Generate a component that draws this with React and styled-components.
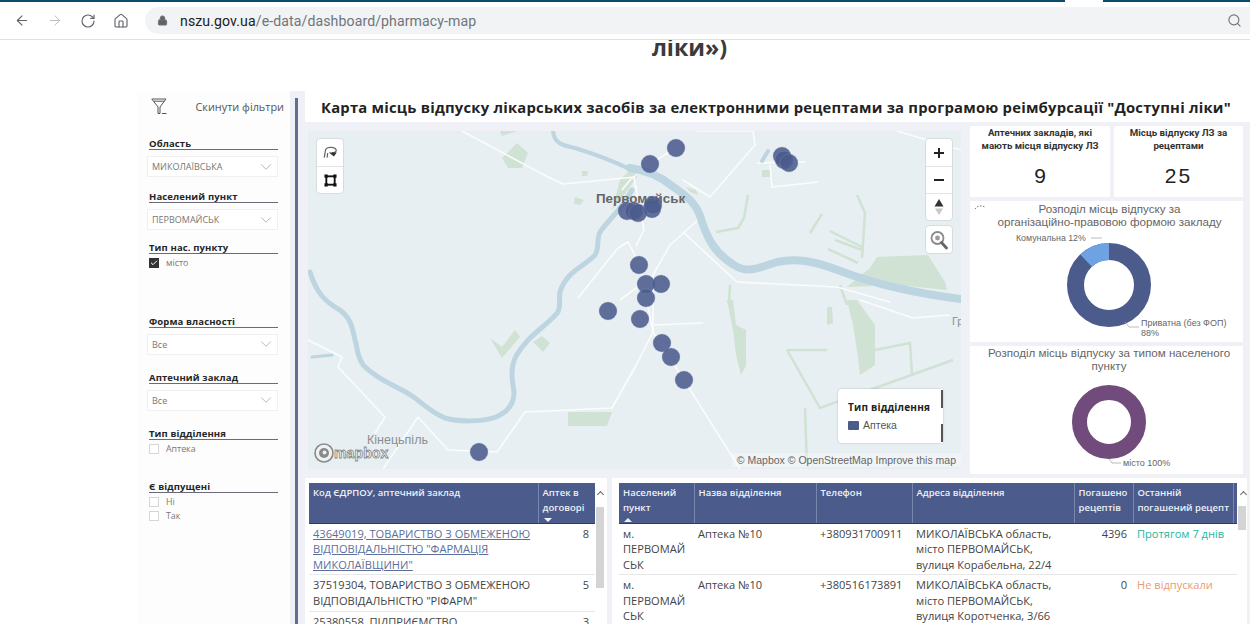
import React from "react";
import styled, { createGlobalStyle } from "styled-components";
import { ArrowLeft, ArrowRight, RotateCw, Home, Lock, Search, ChevronDown, Check } from "lucide-react";

const GlobalStyle = createGlobalStyle`
  html, body {
    margin: 0;
    height: 624px;
    overflow: hidden;
    background: #fff;
    font-family: "Open Sans", "Liberation Sans", sans-serif;
  }
  * { box-sizing: border-box; }
`;

const Page = styled.div`
  width: 1250px;
  height: 624px;
  overflow: hidden;
`;

const TopStrip = styled.div`
  position: relative;
  height: 2px;
  background: #0d4b6d;

  &::after {
    content: "";
    position: absolute;
    left: 1065px;
    width: 38px;
    top: 0;
    height: 2px;
    background: #fff;
  }
`;

const BrowserBar = styled.div`
  height: 38px;
  display: flex;
  align-items: center;
  border-bottom: 1px solid #dfe1e5;
  padding-left: 14px;
  color: #5f6368;
`;

const NavButton = styled.div`
  width: 16px;
  display: flex;
  justify-content: center;
  margin-right: 17px;
  color: ${(p) => (p.$off ? "#b5b8bc" : "#5f6368")};
`;

const UrlPill = styled.div`
  flex: 1;
  height: 27px;
  margin-left: -1px;
  display: flex;
  align-items: center;
  gap: 12px;
  padding: 0 8px 0 12px;
  background: #f1f3f4;
  border-radius: 14px 0 0 14px;
  font-size: 14.1px;
  color: #70757a;
  font-family: "Roboto", sans-serif;

  b {
    font-weight: 400;
    color: #202124;
  }
`;

const UrlText = styled.div`
  flex: 1;
  letter-spacing: 0.1px;
`;

const HeadingStrip = styled.div`
  height: 51px;
  overflow: hidden;
  text-align: center;
  padding-left: 129px;
  font-size: 23.2px;
  line-height: 14px;
  font-weight: 700;
  color: #3b3b3b;
`;

const Dashboard = styled.div`
  margin-left: 137px;
  height: 533px;
  display: flex;
`;

const Sidebar = styled.aside`
  width: 153px;
  background: #fdfdfd;
  padding: 4px 12px 0 10px;
`;

const ResetRow = styled.div`
  height: 22px;
  display: flex;
  align-items: center;
  justify-content: space-between;
  padding-left: 4px;
  margin-right: -6px;
  margin-bottom: 21px;
  font-size: 10.9px;
  color: #555;
`;

const FilterGroup = styled.section`
  margin-top: ${(p) => p.$top || 0}px;
`;

const FilterLabel = styled.div`
  margin-left: 2px;
  height: 11px;
  border-bottom: 1.5px solid #6a6a78;
  font-size: 9.5px;
  line-height: 11px;
  font-weight: 700;
  color: #252525;
  letter-spacing: 0.12px;
  box-sizing: content-box;
`;

const Select = styled.div`
  height: 21px;
  margin-top: 6px;
  padding: 0 2px 0 4px;
  display: flex;
  align-items: center;
  justify-content: space-between;
  border: 1px solid #f0f0f0;
  background: #fff;
  font-size: 9px;
  color: #777;
`;

const CheckRow = styled.div`
  height: 14px;
  margin-left: 2px;
  display: flex;
  align-items: center;
  gap: 7px;
  font-size: 8.8px;
  color: #777;
`;

const CheckBox = styled.span`
  width: 10px;
  height: 10px;
  display: flex;
  align-items: center;
  justify-content: center;
  background: ${(p) => (p.$on ? "#333" : "#fff")};
  border: 1px solid ${(p) => (p.$on ? "#333" : "#d6d6d6")};
  color: #fff;
`;

const CheckList = styled.div`
  margin-top: ${(p) => p.$top}px;
`;

const Rail = styled.div`
  width: 15px;
  background: #eef0f6;
  padding: 7px 0 0 5px;

  &::before {
    content: "";
    display: block;
    width: 3px;
    height: 100%;
    background: #5f6f94;
  }
`;

const Main = styled.main`
  flex: 1;
  min-width: 0;
  background: #eff1f7;
`;

const TitleBar = styled.h1`
  margin: 0;
  height: 31px;
  background: #fff;
  padding-left: 16px;
  display: flex;
  align-items: center;
  font-size: 14.8px;
  font-weight: 700;
  color: #222;
  letter-spacing: 0.225px;
  white-space: nowrap;
`;

const MiddleRow = styled.div`
  display: flex;
  gap: 9px;
  padding: 4px 0 0 3px;
  height: 356px;
`;

const MapFrame = styled.div`
  position: relative;
  width: 653px;
  height: 338px;
  margin-top: 5px;
  background: #e8eff2;
  overflow: hidden;

  svg {
    display: block;
  }
`;

const MapControls = styled.div`
  position: absolute;
  top: ${(p) => p.$top}px;
  ${(p) => (p.$right ? "right: 8px;" : "left: 8px;")}
  width: 28px;
  display: flex;
  flex-direction: column;
  background: #fff;
  border: 1.5px solid #d9dcdd;
  border-radius: 4px;
`;

const MapButton = styled.div`
  height: ${(p) => p.$h || 27}px;
  display: flex;
  align-items: center;
  justify-content: center;
  & + & {
    border-top: 1px solid #e3e3e3;
  }
`;

const Legend = styled.div`
  position: absolute;
  left: 530px;
  top: 258px;
  width: 105px;
  height: 54px;
  padding: 11px 0 0 10px;
  background: #fff;
  border-radius: 4px 0 0 4px;
  box-shadow: 0 0 2px rgba(0, 0, 0, 0.25);
  font-size: 10px;
  color: #555;

  &::before,
  &::after {
    content: "";
    position: absolute;
    right: 0;
    width: 2px;
    height: 18px;
    background: #555;
  }
  &::before { top: 1px; }
  &::after { bottom: 1px; }
`;

const LegendTitle = styled.div`
  font-weight: 700;
  color: #222;
  letter-spacing: 0.2px;
  margin-bottom: 5px;
`;

const LegendItem = styled.div`
  display: flex;
  align-items: center;
  gap: 4px;
  font-family: "Liberation Sans", sans-serif;
  font-size: 10.5px;

  i {
    width: 11px;
    height: 9px;
    background: #4a5b8c;
    border-radius: 1px;
  }
`;

const Attribution = styled.div`
  position: absolute;
  right: 0;
  bottom: 2px;
  padding: 0 5px;
  background: rgba(255, 255, 255, 0.35);
  font-family: "Liberation Sans", sans-serif;
  font-size: 10.5px;
  line-height: 14px;
  color: #666;
`;

const MapboxLogo = styled.div`
  position: absolute;
  left: 6px;
  bottom: 6px;
  display: flex;
  align-items: center;
  gap: 0;
  font-family: "Liberation Sans", sans-serif;
  font-weight: 700;
  font-size: 14.2px;
  line-height: 20px;
  color: #eef2f3;
  -webkit-text-stroke: 0.8px #8a8a8a;
`;

const SideColumn = styled.div`
  width: 273px;
  display: flex;
  flex-direction: column;
  gap: 4px;
`;

const KpiRow = styled.div`
  display: flex;
  gap: 4px;
`;

const KpiCard = styled.div`
  flex: ${(p) => p.$grow};
  height: 71px;
  background: #fff;
  text-align: center;
  padding-top: 1px;
`;

const KpiTitle = styled.div`
  font-family: "Roboto", sans-serif;
  font-size: 9.7px;
  line-height: 12.5px;
  font-weight: 700;
  color: #333;
  height: 37px;
`;

const KpiValue = styled.div`
  font-family: "Liberation Sans", sans-serif;
  font-size: 21px;
  line-height: 24px;
  color: #222;
  letter-spacing: ${(p) => p.$sp || 0}px;
`;

const ChartCard = styled.div`
  height: ${(p) => p.$h}px;
  background: #fff;

  svg {
    display: block;
  }
`;

const ChartText = styled.text`
  font-family: "Liberation Sans", sans-serif;
  font-size: ${(p) => p.$size || 9}px;
  font-weight: ${(p) => p.$weight || 400};
  fill: ${(p) => p.$fill || "#666"};
`;

const BottomRow = styled.div`
  display: flex;
  gap: 5px;
  height: 146px;
`;

const TablePanel = styled.div`
  position: relative;
  width: ${(p) => p.$w}px;
  height: 146px;
  padding: 5px 0 0 ${(p) => p.$pad}px;
  background: #fff;
  overflow: hidden;
`;

const DataTable = styled.table`
  table-layout: fixed;
  border-collapse: collapse;
  width: ${(p) => p.$w}px;
  font-size: 11.1px;
  line-height: 15.5px;
  color: #444;

  th {
    height: 40px;
    padding: 3px 3px 0 4px;
    vertical-align: top;
    text-align: left;
    background: #4a5b8c;
    border-bottom: 1px solid #2f3c62;
    color: #eef0f6;
    font-size: 9.5px;
    line-height: 14.5px;
    font-weight: 600;
    position: relative;
  }
  th + th {
    border-left: 1px solid #7987ad;
  }
  td {
    height: 51px;
    padding: 2px 3px 2px 4px;
    vertical-align: top;
    border-bottom: 1px solid #e8e8e8;
  }
`;

const ShortRow = styled.tr`
  td {
    height: 37px;
  }
`;

const NumberCell = styled.td`
  && {
    text-align: right;
    padding-right: 6px;
  }
`;

const LinkCell = styled.td`
  color: #5d6f9b;
  text-decoration: underline;
`;

const StatusCell = styled.td`
  color: ${(p) => (p.$tone === "ok" ? "#27b59d" : "#ee9a6e")};
`;

const SortMark = styled.span`
  position: absolute;
  left: 5px;
  bottom: 1px;
  width: 0;
  height: 0;
  border-left: 4px solid transparent;
  border-right: 4px solid transparent;
  ${(p) => (p.$up ? "border-bottom: 4px solid #eef0f6;" : "border-top: 4px solid #eef0f6;")}
`;

const ScrollTrack = styled.div`
  position: absolute;
  top: ${(p) => p.$top}px;
  left: ${(p) => p.$left}px;
  width: 8px;
  height: ${(p) => p.$h}px;
  background: #d4d4d4;
`;

const ScrollArrow = styled.span`
  position: absolute;
  top: 14px;
  left: ${(p) => p.$left}px;
  width: 5px;
  height: 5px;
  border-left: 1px solid #666;
  border-top: 1px solid #666;
  transform: rotate(45deg);
`;

const markers = [
  [676, 148], [650, 164], [782, 156], [784, 160], [789, 163],
  [627, 211], [634, 211], [638, 213], [652, 209], [653, 205],
  [639, 265], [646, 284], [661, 284], [646, 298], [608, 311],
  [640, 319], [662, 343], [671, 357], [684, 380], [479, 452],
];

const rivers = [
  { w: 8, d: "M630 168 C645 170 660 176 672 186 C690 198 698 206 702 222 C708 240 716 254 734 265 C748 274 758 268 777 262 C795 258 812 260 843 272 C870 282 905 292 961 299" },
  { w: 4, d: "M553 131 C554 142 560 145 575 148 C595 154 615 162 632 170" },
  { w: 5, d: "M632 190 C620 212 608 220 600 232 C596 240 600 250 594 256 C582 268 566 272 560 292 C558 305 562 300 558 312 C548 325 528 335 516 356 C510 368 512 380 514 392 C514 406 506 413 496 417 C482 422 458 422 445 418 C430 412 424 404 412 396 C398 386 380 382 364 366 C356 356 358 348 355 340 C352 325 350 318 340 310 C325 302 316 292 310 272" },
  { w: 3, d: "M312 357 L332 355" },
  { w: 4, d: "M762 161 L768 151" },
];

const roads = [
  "M462 131 L548 177 L563 184 L635 177",
  "M676 148 L650 164 L630 180 L622 190",
  "M697 131 L753 131 L755 145 L710 197 L683 180",
  "M770 165 L772 187 L818 182",
  "M757 163 L805 162",
  "M897 131 L961 150",
  "M683 232 L737 282 L837 287 L890 302",
  "M698 220 L670 245 L653 275 L653 332 L684 380 L740 469",
  "M578 298 L618 248 L628 242 L640 265 L653 332",
  "M630 377 L653 332",
  "M653 325 L703 323",
  "M308 340 L342 357 L338 367 L385 417 L375 433",
  "M383 469 L418 417 L448 450 L497 452 L525 412 L612 408 L635 367",
  "M860 300 L913 318 L950 315",
  "M620 300 L640 285 L660 284",
  "M634 178 L644 230 L636 246",
];

const greens = [
  "500,131 517,131 502,136",
  "517,143 528,153 522,168 508,168 502,158",
  "575,197 584,200 580,205 574,204",
  "582,171 588,171 587,176 582,176",
  "490,338 502,347 515,330 520,337 502,358",
  "533,342 542,336 550,343 543,352",
  "568,412 612,412 607,426 568,426",
  "870,268 877,257 928,255 945,282 947,290 897,285 847,287",
  "727,300 733,300 736,325 746,330 746,366 741,375 736,355 733,330",
  "847,300 857,300 875,325 875,365 860,375 858,357 853,325",
  "827,307 832,307 833,323 827,325",
  "686,187 696,190 698,195 690,192",
  "620,180 632,168 640,172 628,190 612,210",
  "762,170 770,170 770,177 762,177",
];

const streams = [
  "M748 195 L744 218 L738 228 L716 232",
  "M822 214 L810 233",
  "M857 195 L865 213 L862 258",
  "M830 231 L862 247",
  "M835 240 L862 250",
  "M828 249 L858 263",
  "M787 350 L827 350",
  "M787 350 L820 408 L953 360",
  "M805 408 L807 467",
  "M875 350 L910 343 L912 375",
  "M730 285 L729 302",
  "M840 285 L847 305",
];

const MapDrawing = () => (
  <svg width="653" height="338" viewBox="308 131 653 338">
    {greens.map((p) => <polygon key={p} points={p} fill="#cfe2d3" />)}
    {streams.map((d) => <path key={d} d={d} fill="none" stroke="#cfe2d3" strokeWidth="2.5" />)}
    {roads.map((d) => <path key={d} d={d} fill="none" stroke="#fbfcfc" strokeWidth="1.6" strokeLinejoin="round" />)}
    {rivers.map((r) => <path key={r.d} d={r.d} fill="none" stroke="#bcd5e0" strokeWidth={r.w} strokeLinecap="round" />)}
    <ChartText x="596" y="203" $size={13.4} $fill="#666" $weight={700}>Первомайськ</ChartText>
    <ChartText x="367" y="444" $size={12.5} $fill="#8b8f91">Кінецьпіль</ChartText>
    <ChartText x="952" y="325" $size={11} $fill="#8b8f91">Гр</ChartText>
    {markers.map(([x, y]) => (
      <circle key={`${x}-${y}`} cx={x} cy={y} r="9" fill="#4a5b8c" fillOpacity="0.88" stroke="#8d99b8" strokeOpacity="0.45" strokeWidth="0.6" />
    ))}
  </svg>
);

const TiltIcon = () => (
  <svg width="17" height="15" viewBox="0 0 15 13" fill="none" stroke="#666" strokeWidth="1.1">
    <path d="M2 11 L3 5 C3 1.5 11 1 12.5 4 C13 6 11 7 9 6.5" />
    <path d="M6 6.5 L13 6.5 L10.5 10 Z" fill="#333" stroke="none" />
    <path d="M5 7 L4.5 11" />
  </svg>
);

const SelectIcon = () => (
  <svg width="13" height="13" viewBox="0 0 14 14" fill="none" stroke="#111">
    <rect x="2.5" y="2.5" width="9" height="9" strokeWidth="2" />
    <g fill="#111" stroke="none">
      <rect x="0.5" y="0.5" width="3.5" height="3.5" />
      <rect x="10" y="0.5" width="3.5" height="3.5" />
      <rect x="0.5" y="10" width="3.5" height="3.5" />
      <rect x="10" y="10" width="3.5" height="3.5" />
    </g>
  </svg>
);

const CompassIcon = () => (
  <svg width="10" height="18" viewBox="0 0 10 18">
    <path d="M5 1 L9.5 8.5 L0.5 8.5 Z" fill="#333" />
    <path d="M5 17 L9 10.5 L1 10.5 Z" fill="#c8c8c8" />
  </svg>
);

const PlusIcon = () => (
  <svg width="12" height="12" viewBox="0 0 12 12"><path d="M6 1V11M1 6H11" stroke="#222" strokeWidth="2" /></svg>
);

const MinusIcon = () => (
  <svg width="12" height="4" viewBox="0 0 12 4"><path d="M1 2H11" stroke="#222" strokeWidth="2" /></svg>
);

const ZoomGlass = () => (
  <svg width="20" height="20" viewBox="0 0 20 20" fill="none">
    <circle cx="8.5" cy="8" r="6" stroke="#8a8a8a" strokeWidth="1.8" />
    <circle cx="8.5" cy="8" r="2.4" fill="#9a9a9a" />
    <path d="M12.5 12.5 L17.5 18" stroke="#666" strokeWidth="2.8" strokeLinecap="round" />
  </svg>
);

const FunnelIcon = () => (
  <svg width="17" height="17" viewBox="0 0 17 17" fill="none" stroke="#555" strokeWidth="1">
    <path d="M0.8 1 L15 1 L9 9 L9 15.5 L7 15.5 L7 9 Z" />
    <path d="M2.5 3.2 L13.2 3.2" />
    <path d="M11 15.5 L15.5 15.5" />
  </svg>
);

const LogoMark = () => (
  <svg width="20" height="20" viewBox="0 0 20 20">
    <circle cx="10" cy="10" r="9" fill="#eef2f3" stroke="#8a8a8a" strokeWidth="1.6" />
    <circle cx="10" cy="10" r="5" fill="#8a8a8a" />
    <circle cx="10.5" cy="9.5" r="2" fill="#eef2f3" />
  </svg>
);

const Donut = ({ cx, cy, r, width, color, accent, share }) => (
  <g>
    <circle cx={cx} cy={cy} r={r} fill="none" stroke={color} strokeWidth={width} />
    {accent && (
      <circle
        cx={cx}
        cy={cy}
        r={r}
        fill="none"
        stroke={accent}
        strokeWidth={width}
        pathLength="100"
        strokeDasharray={`${share} ${100 - share}`}
        transform={`rotate(${-90 - share * 3.6} ${cx} ${cy})`}
      />
    )}
  </g>
);

const FilterSelect = ({ label, value, top }) => (
  <FilterGroup $top={top}>
    <FilterLabel>{label}</FilterLabel>
    <Select>
      {value}
      <ChevronDown size={18} strokeWidth={0.8} color="#888" />
    </Select>
  </FilterGroup>
);

const FilterChecks = ({ label, items, top, on, listTop = 2 }) => (
  <FilterGroup $top={top}>
    <FilterLabel>{label}</FilterLabel>
    <CheckList $top={listTop}>
      {items.map((item) => (
        <CheckRow key={item}>
          <CheckBox $on={on}>{on && <Check size={8} strokeWidth={3} />}</CheckBox>
          {item}
        </CheckRow>
      ))}
    </CheckList>
  </FilterGroup>
);

export default function App() {
  return (
    <Page>
      <GlobalStyle />
      <TopStrip />
      <BrowserBar>
        <NavButton><ArrowLeft size={17} strokeWidth={1.6} /></NavButton>
        <NavButton $off><ArrowRight size={17} strokeWidth={1.4} /></NavButton>
        <NavButton><RotateCw size={16} strokeWidth={1.7} /></NavButton>
        <NavButton><Home size={16} strokeWidth={1.7} /></NavButton>
        <UrlPill>
          <Lock size={11} fill="#5f6368" strokeWidth={2} />
          <UrlText><b>nszu.gov.ua</b>/e-data/dashboard/pharmacy-map</UrlText>
          <Search size={15} strokeWidth={1.8} />
        </UrlPill>
      </BrowserBar>
      <HeadingStrip>ліки»)</HeadingStrip>
      <Dashboard>
        <Sidebar>
          <ResetRow>
            <FunnelIcon />
            <span>Скинути фільтри</span>
          </ResetRow>
          <FilterSelect label="Область" value="МИКОЛАЇВСЬКА" />
          <FilterSelect label="Населений пункт" value="ПЕРВОМАЙСЬК" top={14} />
          <FilterChecks label="Тип нас. пункту" items={["місто"]} top={12} on />
          <FilterSelect label="Форма власності" value="Все" top={45.5} />
          <FilterSelect label="Аптечний заклад" value="Все" top={17} />
          <FilterChecks label="Тип відділення" items={["Аптека"]} top={17} />
          <FilterChecks label="Є відпущені" items={["Ні", "Так"]} top={25.5} />
        </Sidebar>
        <Rail />
        <Main>
          <TitleBar>Карта місць відпуску лікарських засобів за електронними рецептами за програмою реімбурсації "Доступні ліки"</TitleBar>
          <MiddleRow>
            <MapFrame>
              <MapDrawing />
              <MapControls $top={7}>
                <MapButton><TiltIcon /></MapButton>
                <MapButton><SelectIcon /></MapButton>
              </MapControls>
              <MapControls $top={7} $right>
                <MapButton><PlusIcon /></MapButton>
                <MapButton><MinusIcon /></MapButton>
                <MapButton><CompassIcon /></MapButton>
              </MapControls>
              <MapControls $top={94} $right>
                <MapButton><ZoomGlass /></MapButton>
              </MapControls>
              <Legend>
                <LegendTitle>Тип відділення</LegendTitle>
                <LegendItem><i />Аптека</LegendItem>
              </Legend>
              <MapboxLogo><LogoMark />mapbox</MapboxLogo>
              <Attribution>© Mapbox © OpenStreetMap Improve this map</Attribution>
            </MapFrame>
            <SideColumn>
              <KpiRow>
                <KpiCard $grow="140">
                  <KpiTitle>Аптечних закладів, які<br />мають місця відпуску ЛЗ</KpiTitle>
                  <KpiValue>9</KpiValue>
                </KpiCard>
                <KpiCard $grow="129">
                  <KpiTitle>Місць відпуску ЛЗ за<br />рецептами</KpiTitle>
                  <KpiValue $sp={2}>25</KpiValue>
                </KpiCard>
              </KpiRow>
              <ChartCard $h={141}>
                <svg width="273" height="141" viewBox="970 201 273 141">
                  <path d="M975 209 C977 206 981 205 985 207" fill="none" stroke="#777" strokeWidth="1" strokeDasharray="1.5 1.5" />
                  <ChartText x="1109.5" y="213" textAnchor="middle" $size={11.6}>Розподіл місць відпуску за</ChartText>
                  <ChartText x="1109.5" y="226" textAnchor="middle" $size={11.6}>організаційно-правовою формою закладу</ChartText>
                  <Donut cx={1109} cy={285} r={33.5} width={17} color="#4a5b8c" accent="#6ea2e3" share={12} />
                  <ChartText x="1016" y="241" $size={8.8}>Комунальна 12%</ChartText>
                  <path d="M1091 238 H1102" stroke="#aaa" strokeWidth="0.8" fill="none" />
                  <path d="M1125 322 L1129 327 H1139" stroke="#aaa" strokeWidth="0.8" fill="none" />
                  <ChartText x="1141" y="326" $size={9}>Приватна (без ФОП)</ChartText>
                  <ChartText x="1141" y="336" $size={9}>88%</ChartText>
                </svg>
              </ChartCard>
              <ChartCard $h={128}>
                <svg width="273" height="128" viewBox="970 346 273 128">
                  <ChartText x="1109" y="357" textAnchor="middle" $size={11.6}>Розподіл місць відпуску за типом населеного</ChartText>
                  <ChartText x="1109" y="370" textAnchor="middle" $size={11.6}>пункту</ChartText>
                  <Donut cx={1109} cy={422} r={29.5} width={15} color="#714b7c" />
                  <path d="M1109 459 L1112 463 H1121" stroke="#aaa" strokeWidth="0.8" fill="none" />
                  <ChartText x="1123" y="466" $size={9}>місто 100%</ChartText>
                </svg>
              </ChartCard>
            </SideColumn>
          </MiddleRow>
          <BottomRow>
            <TablePanel $w={302} $pad={4}>
              <DataTable $w={286}>
                <colgroup>
                  <col style={{ width: 229 }} />
                  <col style={{ width: 57 }} />
                </colgroup>
                <thead>
                  <tr>
                    <th>Код ЄДРПОУ, аптечний заклад</th>
                    <th>Аптек в договорі<SortMark /></th>
                  </tr>
                </thead>
                <tbody>
                  <tr>
                    <LinkCell>43649019, ТОВАРИСТВО З ОБМЕЖЕНОЮ ВІДПОВІДАЛЬНІСТЮ "ФАРМАЦІЯ МИКОЛАЇВЩИНИ"</LinkCell>
                    <NumberCell>8</NumberCell>
                  </tr>
                  <ShortRow>
                    <td>37519304, ТОВАРИСТВО З ОБМЕЖЕНОЮ ВІДПОВІДАЛЬНІСТЮ "РІФАРМ"</td>
                    <NumberCell>5</NumberCell>
                  </ShortRow>
                  <tr>
                    <td>25380558, ПІДПРИЄМСТВО</td>
                    <NumberCell>3</NumberCell>
                  </tr>
                </tbody>
              </DataTable>
              <ScrollArrow $left={293} />
              <ScrollTrack $left={291} $top={29} $h={81} />
            </TablePanel>
            <TablePanel $w={635} $pad={7}>
              <DataTable $w={618}>
                <colgroup>
                  <col style={{ width: 75 }} />
                  <col style={{ width: 122 }} />
                  <col style={{ width: 96 }} />
                  <col style={{ width: 162 }} />
                  <col style={{ width: 59 }} />
                  <col style={{ width: 100 }} />
                  <col style={{ width: 4 }} />
                </colgroup>
                <thead>
                  <tr>
                    <th>Населений пункт<SortMark $up /></th>
                    <th>Назва відділення</th>
                    <th>Телефон</th>
                    <th>Адреса відділення</th>
                    <th>Погашено рецептів</th>
                    <th>Останній погашений рецепт</th>
                    <th />
                  </tr>
                </thead>
                <tbody>
                  <tr>
                    <td>м.<br />ПЕРВОМАЙ<br />СЬК</td>
                    <td>Аптека №10</td>
                    <td>+380931700911</td>
                    <td>МИКОЛАЇВСЬКА область, місто ПЕРВОМАЙСЬК, вулиця Корабельна, 22/4</td>
                    <NumberCell>4396</NumberCell>
                    <StatusCell $tone="ok" colSpan={2}>Протягом 7 днів</StatusCell>
                  </tr>
                  <tr>
                    <td>м.<br />ПЕРВОМАЙ<br />СЬК</td>
                    <td>Аптека №10</td>
                    <td>+380516173891</td>
                    <td>МИКОЛАЇВСЬКА область, місто ПЕРВОМАЙСЬК, вулиця Коротченка, 3/66</td>
                    <NumberCell>0</NumberCell>
                    <StatusCell colSpan={2}>Не відпускали</StatusCell>
                  </tr>
                </tbody>
              </DataTable>
              <ScrollArrow $left={629} />
              <ScrollTrack $left={626} $top={28} $h={24} />
            </TablePanel>
          </BottomRow>
        </Main>
      </Dashboard>
    </Page>
  );
}
